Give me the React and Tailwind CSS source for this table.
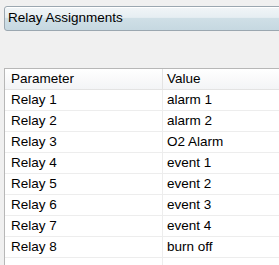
import React from "react";

const rows = [
  ["Relay 1", "alarm 1"],
  ["Relay 2", "alarm 2"],
  ["Relay 3", "O2 Alarm"],
  ["Relay 4", "event 1"],
  ["Relay 5", "event 2"],
  ["Relay 6", "event 3"],
  ["Relay 7", "event 4"],
  ["Relay 8", "burn off"],
];

export default function App() {
  return (
    <div
      className="w-[279px] h-[265px] overflow-hidden bg-[#f0f0f0] text-[13.5px] text-black"
      style={{ fontFamily: '"Liberation Sans", Arial, sans-serif' }}
    >
      <div className="pt-[6px] pl-[4px]">
        <div className="w-[300px] h-[25px] border border-[#9ba7b0] rounded-l-[3px] bg-[linear-gradient(to_bottom,#f1f5f7_0%,#e6eef2_45%,#cfdfe6_50%,#c6d8e1_100%)] flex items-center pl-[3px] shadow-[inset_0_1px_0_#ffffff]">
          Relay Assignments
        </div>
      </div>
      <div className="mt-[37px] ml-[4px] w-[300px] h-[200px] bg-white border-l border-t border-[#b7b7b7]">
        <div className="flex h-[21px] border-b border-[#e3e3e3] bg-[linear-gradient(to_bottom,#ffffff,#f3f4f6)]">
          <div className="w-[158px] border-r border-[#e3e3e3] pl-[6px] flex items-center">Parameter</div>
          <div className="flex-1 pl-[4px] flex items-center">Value</div>
        </div>
        {rows.map(([p, v]) => (
          <div key={p} className="flex h-[21px] border-b border-[#ededed]">
            <div className="w-[158px] border-r border-[#ededed] pl-[6px] flex items-center">{p}</div>
            <div className="flex-1 pl-[4px] flex items-center">{v}</div>
          </div>
        ))}
        <div className="flex h-[20px]">
          <div className="w-[158px] border-r border-[#ededed]" />
          <div className="flex-1" />
        </div>
      </div>
    </div>
  );
}
